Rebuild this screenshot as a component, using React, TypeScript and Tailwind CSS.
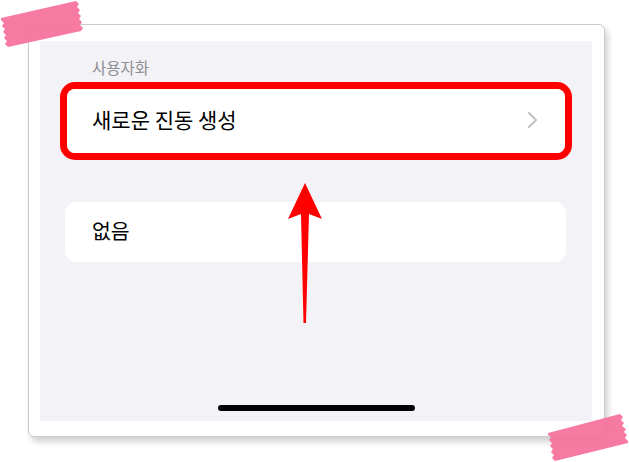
// Washi tape strip, drawn as a jagged polygon
function Tape({ points, className }: { points: string; className: string }) {
  return (
    <svg className={className} viewBox="0 0 90 58" width="90" height="58">
      <polygon points={points} fill="#f5709a" fillOpacity="0.93" />
    </svg>
  );
}

const topTape =
  '1,18 76,1 79,4 77,7 80,10 78,13 81,16 79,19 82,22 80,25 83,28 81,31 8,47 5,44 7,41 4,38 6,35 3,32 5,29 2,26 4,23 1,20';

const bottomTape =
  '8,28 80,9 83,12 81,15 84,18 82,21 86,24 84,27 87,30 85,33 88,36 88,38 15,56 12,53 14,50 11,47 13,44 10,41 12,38 9,35 11,32 8,30';

export default function App() {
  return (
    <div
      className="relative w-[629px] h-[462px] overflow-hidden bg-white"
      style={{ fontFamily: '"Noto Sans CJK KR", "Noto Sans", sans-serif' }}
    >
      <div className="pl-[28px] pt-[24px]">
        <div className="w-[577px] h-[413px] rounded-[6px] border border-[#cbcbcb] bg-white pl-[11px] pt-[16px] pr-[12px] pb-[15px] shadow-[3px_5px_6px_rgba(0,0,0,0.18)]">
          <div className="flex h-full flex-col bg-[#f2f2f7]">
            {/* Section header */}
            <div className="pl-[52px] pt-[16px] text-[15.5px] leading-[20px] text-[#8e8e93]">사용자화</div>

            {/* Highlighted row */}
            <div className="mx-[20px] mt-[5px] h-[78px] rounded-[15px] border-[7px] border-[#ff0000]">
              <div className="flex h-full items-center justify-between rounded-[8px] bg-white pl-[25px] pr-[26px]">
                <span className="-mt-[4px] text-[21px] leading-none text-black">새로운 진동 생성</span>
                <svg width="12" height="18" viewBox="0 0 12 18" className="-mt-[2px]">
                  <polyline
                    points="2,2 9,9 2,16"
                    fill="none"
                    stroke="#c4c4c7"
                    strokeWidth="2.2"
                    strokeLinecap="round"
                    strokeLinejoin="round"
                  />
                </svg>
              </div>
            </div>

            <div className="ml-[25px] mt-[42px] flex h-[60px] w-[501px] items-center rounded-[11px] bg-white pl-[27px]">
              <span className="-mt-[3px] text-[20.5px] leading-none text-black">없음</span>
            </div>

            <div className="flex-1" />

            {/* Home indicator */}
            <div className="mb-[10px] h-[6px] w-[197px] self-center rounded-full bg-black" />
          </div>
        </div>
      </div>

      {/* Annotation arrow */}
      <svg className="absolute left-0 top-0" width="629" height="462" viewBox="0 0 629 462">
        <path d="M305,183 L322,219 L309,214 L306,323 L303.5,323 L301,214 L288,219 Z" fill="#ff0000" />
      </svg>

      <Tape className="absolute left-0 top-0" points={topTape} />
      <Tape className="absolute left-[540px] top-[405px]" points={bottomTape} />
    </div>
  );
}
